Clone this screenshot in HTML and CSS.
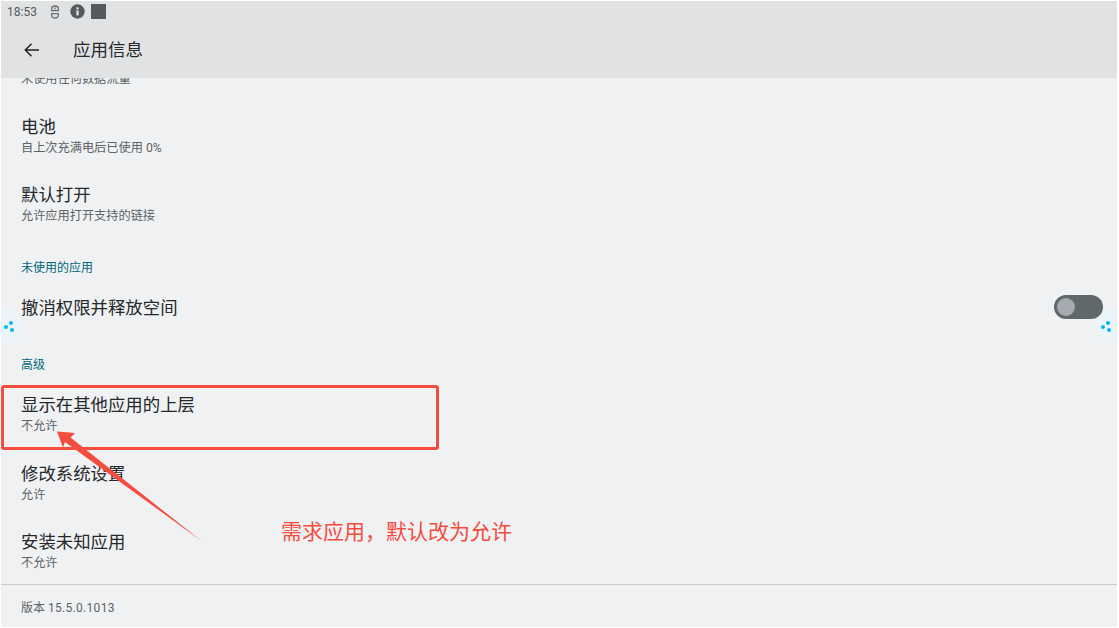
FILE: index.html
```html
<!DOCTYPE html>
<html lang="zh-CN">
<head>
<meta charset="utf-8">
<title>应用信息</title>
<link rel="stylesheet" href="styles.css">
</head>
<body>
<div class="screen">
  <header class="topbar">
    <div class="status">
      <span class="time">18:53</span>
      <svg class="st-usb" width="10" height="14" viewBox="0 0 10 14"><path d="M1.700 5.500V3.500C1.700 1.900 3.200 1 5 1s3.300.9 3.300 2.500v2M.8 5.600h8.400M8.300 8.600H1.700V10c0 2 1.400 3 3.300 3s3.300-1 3.300-3V8M5 2.500v2" fill="none" stroke="#6a6f71" stroke-width="1.300"/></svg>
      <svg class="st-info" width="15" height="15" viewBox="0 0 15 15"><circle cx="7.500" cy="7.500" r="7.200" fill="#555a5c"/><rect x="6.400" y="6.400" width="2.200" height="5" fill="#e8e9eb"/><rect x="6.400" y="3.300" width="2.200" height="2" fill="#e8e9eb"/></svg>
      <span class="st-square"></span>
    </div>
    <div class="appbar">
      <svg class="back" width="18" height="18" viewBox="0 0 18 18"><path d="M16 9H2.500M8.500 2.800 2.300 9l6.200 6.200" fill="none" stroke="#222" stroke-width="1.500"/></svg>
      <h1 class="page-title">应用信息</h1>
    </div>
  </header>

  <main class="list">
    <div class="list-inner">
      <div class="row row-cut">
        <div class="sub">未使用任何数据流量</div>
      </div>
      <div class="row">
        <div class="title">电池</div>
        <div class="sub">自上次充满电后已使用 0%</div>
      </div>
      <div class="row">
        <div class="title">默认打开</div>
        <div class="sub">允许应用打开支持的链接</div>
      </div>
      <div class="section">未使用的应用</div>
      <div class="row row-toggle">
        <div class="title">撤消权限并释放空间</div>
        <span class="switch"><span class="knob"></span></span>
      </div>
      <div class="section section-adv">高级</div>
      <div class="row">
        <div class="title">显示在其他应用的上层</div>
        <div class="sub">不允许</div>
      </div>
      <div class="row">
        <div class="title">修改系统设置</div>
        <div class="sub">允许</div>
      </div>
      <div class="row">
        <div class="title">安装未知应用</div>
        <div class="sub">不允许</div>
      </div>
    </div>
  </main>

  <footer class="footer">版本 <span class="ver">15.5.0.1013</span></footer>

  <div class="edge edge-left"><i class="d1"></i><i class="d2"></i><i class="d3"></i></div>
  <div class="edge edge-right"><i class="d1"></i><i class="d2"></i><i class="d3"></i></div>

  <div class="note-box"></div>
  <svg class="note-arrow" width="1119" height="628" viewBox="0 0 1119 628"><polygon points="57,431.500 75,433 70.500,437.500 201.500,541 65,442 63,447.500" fill="#f44c3f"/></svg>
  <div class="note-text">需求应用&#65292;默认改为允许</div>
</div>
</body>
</html>
```

FILE: styles.css
```css
* { box-sizing: border-box; }
html, body { margin: 0; padding: 0; }
body {
  width: 1119px;
  height: 628px;
  overflow: hidden;
  background: #eff1f3;
  font-family: Roboto, "Noto Sans CJK SC", sans-serif;
}
.screen {
  position: relative;
  width: 1119px;
  height: 628px;
  display: flex;
  flex-direction: column;
}
.screen::after {
  content: "";
  position: absolute;
  inset: 0;
  z-index: 3;
  border-style: solid;
  border-color: #ffffff;
  border-width: 1px 2px 1px 1px;
  pointer-events: none;
}
.topbar {
  flex: 0 0 78px;
  background: #e1e2e4;
  position: relative;
  z-index: 1;
}
.status {
  height: 22px;
  padding: 1px 0 0 7px;
  display: flex;
  align-items: center;
}
.time { font-size: 12px; color: #555a5c; width: 43px; }
.st-usb { margin-right: 10px; }
.st-info { margin-right: 6px; }
.st-square { width: 15px; height: 15px; background: #555a5c; }
.appbar {
  height: 56px;
  display: flex;
  align-items: center;
  padding: 0 0 0 23px;
}
.back { margin-right: 32px; }
.page-title {
  margin: 0 0 3px;
  font-size: 17.500px;
  font-weight: 400;
  color: #26282a;
}
.list {
  flex: 1 1 auto;
  overflow: hidden;
  min-height: 0;
}
.list-inner { margin-top: -10px; }
.row {
  height: 68.500px;
  padding: 0 21px;
  display: flex;
  flex-direction: column;
  justify-content: center;
}
.row-cut {
  height: 33.500px;
  padding-top: 2.250px;
  justify-content: flex-start;
}
.title {
  font-size: 17.400px;
  line-height: 24px;
  color: #26282a;
}
.sub {
  font-size: 12.200px;
  line-height: 18px;
  color: #5d6366;
}
.section {
  height: 37px;
  padding: 20px 21px 0;
  font-size: 12px;
  line-height: 18px;
  color: #00687a;
}
.row-toggle {
  height: 65px;
  flex-direction: row;
  align-items: center;
  justify-content: space-between;
  padding-right: 16px;
}
.section-adv { height: 39.500px; padding-top: 15.500px; }
.switch {
  position: relative;
  z-index: 2;
  width: 49px;
  height: 24px;
  margin-bottom: 2px;
  border-radius: 12px;
  background: #60686a;
  padding: 3px 0 0 3px;
  display: block;
}
.knob {
  display: block;
  width: 18px;
  height: 18px;
  border-radius: 50%;
  background: #a5abb0;
}
.footer {
  flex: 0 0 44px;
  border-top: 1px solid #c9cbcd;
  padding: 14px 21px 0;
  font-size: 12px;
  line-height: 18px;
  color: #5d6366;
  background: #eff1f3;
}
.ver { letter-spacing: 0.3px; }
.edge {
  position: absolute;
  top: 308px;
  width: 36px;
  height: 36px;
  border-radius: 50%;
  background: #ebf5f9;
}
.edge-left { left: -14px; }
.edge-right { left: 1097px; }
.edge i {
  position: absolute;
  width: 4px;
  height: 4px;
  border-radius: 50%;
  background: #08b4f8;
}
.edge-left .d1 { left: 18px; top: 17px; }
.edge-left .d2 { left: 23px; top: 13px; }
.edge-left .d3 { left: 24.300px; top: 19.700px; }
.edge-right .d1 { left: 3.700px; top: 17px; }
.edge-right .d2 { left: 8.700px; top: 13px; }
.edge-right .d3 { left: 10px; top: 19.700px; }
.note-box {
  position: absolute;
  left: 1px;
  top: 385px;
  width: 438px;
  height: 65px;
  border: 3px solid #f44c3f;
  border-radius: 3px;
}
.note-arrow {
  position: absolute;
  left: 0;
  top: 0;
}
.note-text {
  position: absolute;
  left: 281px;
  top: 515px;
  font-family: "Noto Sans CJK SC", sans-serif;
  font-size: 21px;
  line-height: 30px;
  color: #f44c3f;
  white-space: nowrap;
}
```
